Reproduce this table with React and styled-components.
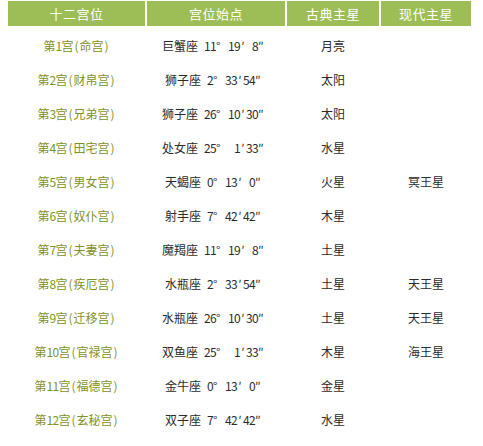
import React from "react";
import styled, { createGlobalStyle } from "styled-components";

const GlobalStyle = createGlobalStyle`
  body {
    margin: 0;
    background: #ffffff;
    font-family: "Noto Sans CJK SC", "DejaVu Sans", sans-serif;
  }
`;

const Wrapper = styled.div`
  padding: 1px 0 0 8px;
`;

const Grid = styled.div`
  display: grid;
  grid-template-columns: 137px 138px 92px 90px;
  column-gap: 2px;
`;

const HeadRow = styled(Grid)`
  margin-bottom: 3px;
`;

const HeadCell = styled.div`
  height: 25px;
  display: flex;
  align-items: center;
  justify-content: center;
  background-color: #9dbd57;
  color: #ffffff;
  font-size: 13px;
  letter-spacing: 0.5px;
`;

const Row = styled(Grid)`
  height: 34px;
`;

const Cell = styled.div`
  display: flex;
  align-items: center;
  justify-content: center;
  font-size: 12px;
  line-height: 16px;
  color: ${(p) => (p.house ? "#7f9128" : "#2b2b2b")};
`;

// fixed-pitch glyph box, half width for ascii and ′, full width for the rest
const Glyph = styled.span`
  display: inline-block;
  width: ${(p) => (p.half ? 6 : 12)}px;
  text-align: ${(p) => (p.half ? "center" : "left")};
`;

const isHalf = (c) => c.charCodeAt(0) < 128 || c === "′";

const Mono = ({ text }) =>
  [...text].map((c, i) => (
    <Glyph key={i} half={isHalf(c)}>
      {c === " " ? "\u00a0" : c}
    </Glyph>
  ));

const houses = [
  ["第1宫(命宫)", "巨蟹座 11°19′ 8″", "月亮", ""],
  ["第2宫(财帛宫)", "狮子座 2°33′54″", "太阳", ""],
  ["第3宫(兄弟宫)", "狮子座 26°10′30″", "太阳", ""],
  ["第4宫(田宅宫)", "处女座 25° 1′33″", "水星", ""],
  ["第5宫(男女宫)", "天蝎座 0°13′ 0″", "火星", "冥王星"],
  ["第6宫(奴仆宫)", "射手座 7°42′42″", "木星", ""],
  ["第7宫(夫妻宫)", "魔羯座 11°19′ 8″", "土星", ""],
  ["第8宫(疾厄宫)", "水瓶座 2°33′54″", "土星", "天王星"],
  ["第9宫(迁移宫)", "水瓶座 26°10′30″", "土星", "天王星"],
  ["第10宫(官禄宫)", "双鱼座 25° 1′33″", "木星", "海王星"],
  ["第11宫(福德宫)", "金牛座 0°13′ 0″", "金星", ""],
  ["第12宫(玄秘宫)", "双子座 7°42′42″", "水星", ""],
];

const App = () => {
  return (
    <Wrapper>
      <GlobalStyle />
      <HeadRow>
        <HeadCell>十二宫位</HeadCell>
        <HeadCell>宫位始点</HeadCell>
        <HeadCell>古典主星</HeadCell>
        <HeadCell>现代主星</HeadCell>
      </HeadRow>
      {houses.map((h) => (
        <Row key={h[0]}>
          <Cell house>
            <Mono text={h[0]} />
          </Cell>
          <Cell>
            <Mono text={h[1]} />
          </Cell>
          <Cell>
            <Mono text={h[2]} />
          </Cell>
          <Cell>
            <Mono text={h[3]} />
          </Cell>
        </Row>
      ))}
    </Wrapper>
  );
};

export default App;
